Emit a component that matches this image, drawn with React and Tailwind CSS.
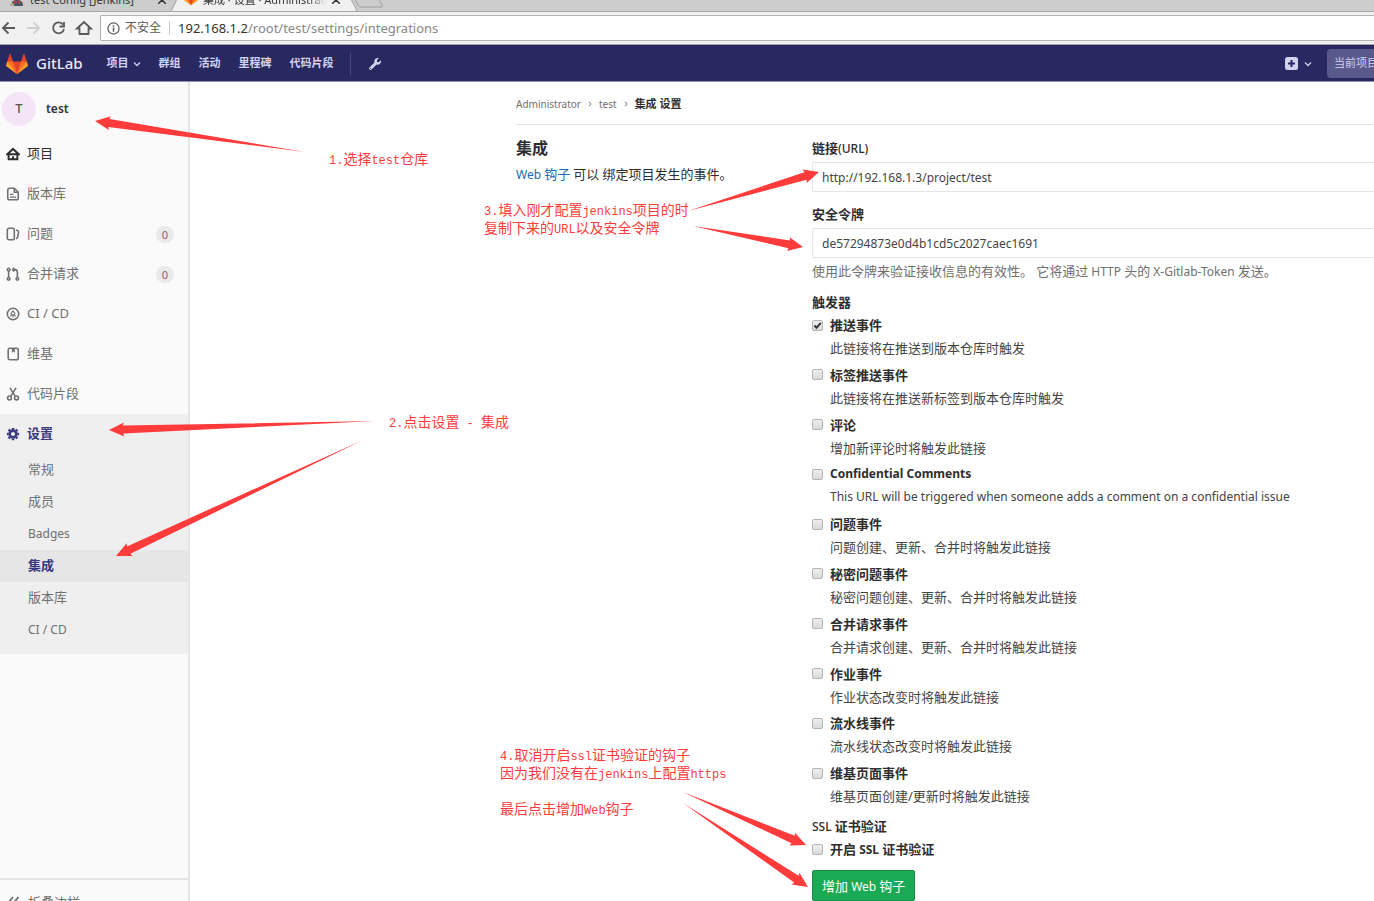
import React, { useState } from 'react';
import { FaWrench } from 'react-icons/fa';

const topLinks = ['群组', '活动', '里程碑', '代码片段'];

const sideItems = [
  { label: '项目', icon: 'home', dark: true },
  { label: '版本库', icon: 'doc' },
  { label: '问题', icon: 'issues', count: 0 },
  { label: '合并请求', icon: 'merge', count: 0 },
  { label: 'CI / CD', icon: 'rocket' },
  { label: '维基', icon: 'book' },
  { label: '代码片段', icon: 'snippet' },
];

const settingsItems = [
  { label: '常规' },
  { label: '成员' },
  { label: 'Badges', latin: true },
  { label: '集成', active: true },
  { label: '版本库' },
  { label: 'CI / CD', latin: true },
];

const initialTriggers = [
  { id: 'push', title: '推送事件', text: '此链接将在推送到版本仓库时触发', checked: true },
  { id: 'tag', title: '标签推送事件', text: '此链接将在推送新标签到版本仓库时触发' },
  { id: 'note', title: '评论', text: '增加新评论时将触发此链接' },
  { id: 'confidential-note', title: 'Confidential Comments', text: 'This URL will be triggered when someone adds a comment on a confidential issue', latin: true },
  { id: 'issue', title: '问题事件', text: '问题创建、更新、合并时将触发此链接' },
  { id: 'confidential-issue', title: '秘密问题事件', text: '秘密问题创建、更新、合并时将触发此链接' },
  { id: 'merge', title: '合并请求事件', text: '合并请求创建、更新、合并时将触发此链接' },
  { id: 'job', title: '作业事件', text: '作业状态改变时将触发此链接' },
  { id: 'pipeline', title: '流水线事件', text: '流水线状态改变时将触发此链接' },
  { id: 'wiki', title: '维基页面事件', text: '维基页面创建/更新时将触发此链接' },
];

// Each arrow goes from its thin tail to its tip
const arrows = [
  { from: [305, 152], to: [95, 121] },
  { from: [375, 421], to: [109, 430] },
  { from: [363, 440], to: [116, 556] },
  { from: [688, 211], to: [819, 172] },
  { from: [693, 226], to: [803, 247] },
  { from: [683, 792], to: [806, 845] },
  { from: [683, 803], to: [808, 887] },
];

const arrowPoints = ({ from, to }) => {
  const dx = to[0] - from[0];
  const dy = to[1] - from[1];
  const len = Math.hypot(dx, dy);
  const ux = dx / len;
  const uy = dy / len;
  const at = (back, side) => `${to[0] - ux * back - uy * side},${to[1] - uy * back + ux * side}`;
  return [`${from[0]},${from[1]}`, at(14, 4), at(15, 7), `${to[0]},${to[1]}`, at(15, -7), at(14, -4)].join(' ');
};

const GitLabLogo = ({ className }) => (
  <svg viewBox="0 0 36 36" className={className} aria-hidden="true">
    <path fill="#e24329" d="M2 14l9.38 9v-9l-4-12.28c-.205-.632-1.176-.632-1.38 0z" />
    <path fill="#e24329" d="M34 14l-9.38 9v-9l4-12.28c.205-.632 1.176-.632 1.38 0z" />
    <path fill="#e24329" d="M18 34.38L3 14h30z" />
    <path fill="#fc6d26" d="M18 34.38L11.38 14H2l4 11z" />
    <path fill="#fc6d26" d="M18 34.38L24.62 14H34l-4 11z" />
    <path fill="#fca326" d="M2 14L.1 20.16c-.18.565 0 1.2.5 1.56L18 34.38z" />
    <path fill="#fca326" d="M34 14l1.9 6.16c.18.565 0 1.2-.5 1.56L18 34.38z" />
  </svg>
);

const Chevron = ({ className }) => (
  <svg viewBox="0 0 8 8" className={className} fill="none" stroke="currentColor" strokeWidth="1.3" aria-hidden="true">
    <path d="M1 2.5l3 3 3-3" />
  </svg>
);

const sideIcons = {
  home: (
    <>
      <path d="M1.500 8.200L8 2.200l6.500 6z" strokeWidth="2.200" />
      <path d="M3 8.500V14h10V8.500M8 14v-3.500" strokeWidth="2.200" />
    </>
  ),
  doc: (
    <>
      <path d="M9.500 1.500H4A2 2 0 0 0 2 3.500v9a2 2 0 0 0 2 2h8a2 2 0 0 0 2-2V6z" />
      <path d="M9.500 1.500V6H14" />
      <path d="M4.500 8.500h4M4.500 11.500h7" strokeWidth="1.400" />
    </>
  ),
  issues: (
    <>
      <rect x="1.500" y="1.500" width="8" height="13" rx="2" />
      <path d="M11.500 3.500c2 .3 3 1.200 2.800 3l-.8 4.500c-.2 1.200-.9 2-2 2.500" />
    </>
  ),
  merge: (
    <>
      <circle cx="3" cy="3" r="1.500" />
      <circle cx="3" cy="13.500" r="1.500" />
      <circle cx="13" cy="13.500" r="1.500" />
      <path d="M3 4.500V12M13 12V6c0-2-1-3-3-3H7.500M9.500 1L7.500 3l2 2" />
    </>
  ),
  rocket: (
    <>
      <circle cx="8" cy="8" r="6.500" />
      <path d="M8 4.500l2 2.500v2H6V7zM6 9.500l-.8 1.500M10 9.500l.8 1.500M8 9.500V12" strokeWidth="1.200" />
    </>
  ),
  book: (
    <>
      <rect x="2.500" y="1.500" width="11.500" height="13" rx="2" />
      <path d="M7 2h3v4L8.500 5 7 6z" fill="currentColor" strokeWidth="0.500" />
    </>
  ),
  snippet: (
    <>
      <circle cx="4" cy="12.500" r="2.200" />
      <circle cx="12" cy="12.500" r="2.200" />
      <path d="M4.500 1l6 9.500M11.500 1l-6 9.500" />
    </>
  ),
};

const SideIcon = ({ name }) => (
  <svg viewBox="0 0 16 16" className="w-[14px] h-[14px] shrink-0" fill="none" stroke="currentColor" strokeWidth="1.8" aria-hidden="true">
    {sideIcons[name]}
  </svg>
);

const GearIcon = () => (
  <svg viewBox="0 0 16 16" className="w-[14px] h-[14px] shrink-0" fill="none" stroke="currentColor" aria-hidden="true">
    <circle cx="8" cy="8" r="3.800" strokeWidth="3" />
    <path strokeWidth="3" d="M8 1v2M8 13v2M1 8h2M13 8h2M3 3l1.500 1.500M11.500 11.500L13 13M3 13l1.500-1.500M11.500 4.500L13 3" />
  </svg>
);

const Checkbox = ({ id, checked, onChange }) => (
  <span className="relative flex w-[11px] h-[11px] shrink-0">
    <input
      id={id}
      type="checkbox"
      checked={checked}
      onChange={onChange}
      className="appearance-none w-full h-full rounded-xs border border-[#b4b4b4] bg-gradient-to-b from-[#eeeeee] to-[#dadada]"
    />
    {checked && (
      <svg viewBox="0 0 11 11" className="absolute inset-0 pointer-events-none" fill="none" stroke="#333" strokeWidth="2" aria-hidden="true">
        <path d="M2.500 5.500l2 2.300L8.800 2.800" />
      </svg>
    )}
  </span>
);

const CloseTab = () => (
  <button type="button" aria-label="关闭" className="ml-auto pb-[7px]">
    <svg viewBox="0 0 8 8" className="w-2 h-2" stroke="#333" strokeWidth="1.5">
      <path d="M0 0l8 8M8 0L0 8" />
    </svg>
  </button>
);

const BrowserBar = () => (
  <div className="bg-[#f1f1f1]">
    <div className="flex items-end h-3 overflow-hidden bg-[#cccccc] border-b border-[#a8a8a8] text-[11px] leading-4 text-[#333]">
      <div className="flex items-end w-[171px] pl-[10px] pr-[5px] gap-[6px] shrink-0">
        <svg viewBox="0 0 14 14" className="w-[14px] h-[14px] mb-[5px]" aria-hidden="true">
          <circle cx="7" cy="4" r="4" fill="#e8c9a8" />
          <path d="M1 14c0-4 2-6 6-6s6 2 6 6z" fill="#4a5568" />
          <path d="M4 8l3 2 3-2v4l-3-2-3 2z" fill="#d33833" />
          <path d="M1 10l3 2v2H0z" fill="#b9aa92" />
        </svg>
        <span className="pb-[3px] whitespace-nowrap">test Config [Jenkins]</span>
        <CloseTab />
      </div>
      <svg viewBox="0 0 8 12" className="w-2 h-3 shrink-0" aria-hidden="true">
        <path d="M0 12L6 0h2v12z" fill="#f1f1f1" />
        <path d="M0 12L6 0" stroke="#999" fill="none" />
      </svg>
      <div className="flex items-end w-[170px] h-3 pl-1 pr-[9px] gap-1 shrink-0 bg-[#f1f1f1]">
        <GitLabLogo className="w-4 h-4 mb-[5px]" />
        <span className="pb-[3px] whitespace-nowrap overflow-hidden w-[124px] mask-r-from-85%">集成 · 设置 · Administrator</span>
        <CloseTab />
      </div>
      <svg viewBox="0 0 40 12" className="w-10 h-3 shrink-0" aria-hidden="true">
        <path d="M0 0h2l6 12H0z" fill="#f1f1f1" />
        <path d="M2 0l6 12M6 0l3 6q1 2 3 2h20q2 0 1-2l-3-6" stroke="#a0a0a0" fill="none" />
      </svg>
    </div>
    <div className="flex items-center h-[33px] pl-[1px] text-[#5a5a5a] border-b border-[#a0a0a8]">
      <svg viewBox="0 0 94 16" className="w-[94px] h-4 shrink-0" fill="none" stroke="currentColor" strokeWidth="1.8" aria-hidden="true">
        <path d="M14 8H2M7.500 2.500L2 8l5.500 5.500" />
        <path d="M26 8h12M32.500 2.500L38 8l-5.500 5.500" stroke="#d0d0d0" />
        <path d="M62 4.500A5.500 5.500 0 1 0 63 9M63 2v4.500h-4.500" />
        <path d="M76 8.500L83 2l7 6.500h-2.500V14h-9V8.500z" />
      </svg>
      <div className="flex items-center flex-1 h-[26px] ml-[5px] pl-[6px] bg-white border border-r-0 border-[#b0b0b0] rounded-l-xs text-[12px]">
        <svg viewBox="0 0 14 14" className="w-[13px] h-[13px] shrink-0" fill="none" stroke="currentColor" strokeWidth="1.3" aria-hidden="true">
          <circle cx="7" cy="7" r="6" />
          <path d="M7 6v4.500M7 3.500v1.500" strokeWidth="1.600" />
        </svg>
        <span className="ml-[5px] pr-2 border-r border-[#c8c8c8] leading-[14px]">不安全</span>
        <span className="ml-2 text-[13px] leading-5 text-[#888]">
          <span className="text-[#333]">192.168.1.2</span>/root/test/settings/integrations
        </span>
      </div>
    </div>
  </div>
);

const TopNav = () => (
  <header className="flex items-center h-[37px] pt-px bg-[#292961] border-b border-[#9494b0] text-[#d1d1f0] text-[11px] font-bold shrink-0">
    <a href="#" className="flex items-center gap-2 pl-[6px] text-[15px] font-medium text-[#e8e8f8]">
      <GitLabLogo className="w-[22px] h-[22px]" />
      GitLab
    </a>
    <nav className="flex items-center gap-[18px] ml-6">
      <button type="button" className="flex items-center gap-1">
        项目
        <Chevron className="w-2 h-2" />
      </button>
      {topLinks.map((label) => (
        <a key={label} href="#">{label}</a>
      ))}
    </nav>
    <a href="#" aria-label="管理区域" className="flex items-center h-[22px] ml-4 pl-[18px] border-l border-[#49487f]">
      <FaWrench size={12} />
    </a>
    <button type="button" aria-label="新建" className="flex items-center gap-[6px] ml-auto mr-[15px]">
      <svg viewBox="0 0 13 13" className="w-[13px] h-[13px]" aria-hidden="true">
        <rect width="13" height="13" rx="2.500" fill="#d1d1f0" />
        <path d="M6.500 3v7M3 6.500h7" stroke="#292961" strokeWidth="2" />
      </svg>
      <Chevron className="w-2 h-2" />
    </button>
    <button type="button" className="w-[47px] h-[29px] pl-[7px] overflow-hidden whitespace-nowrap rounded-l bg-[#5a598b] font-normal text-left">
      当前项目
    </button>
  </header>
);

const Sidebar = () => (
  <aside className="flex flex-col w-[190px] shrink-0 bg-[#fafafa] border-r-2 border-[#e5e5e5] text-[13px] text-[#707070]">
    <a href="#" className="flex items-center gap-[10px] pt-[10px] pl-[2px] mb-2 font-semibold text-[12px] text-[#333]">
      <span className="flex items-center justify-center w-[34px] h-[34px] rounded-full bg-[#f3e5f5] font-medium text-[13px] text-[#555]">T</span>
      test
    </a>
    <nav>
      {sideItems.map((item) => (
        <a
          key={item.label}
          href="#"
          className={`flex items-center h-10 pl-[6px] pr-[14px] gap-[7px] ${item.dark ? 'text-[#2e2e2e]' : ''}`}
        >
          <SideIcon name={item.icon} />
          {item.label}
          {item.count !== undefined && (
            <span className="ml-auto px-[6px] rounded-full bg-[#e9e9e9] text-[11px] leading-[17px]">{item.count}</span>
          )}
        </a>
      ))}
      <div className="pb-2 bg-[#efefef]">
        <a href="#" className="flex items-center h-10 pl-[6px] gap-[7px] font-bold text-[#393982]">
          <GearIcon />
          设置
        </a>
        {settingsItems.map((item) => (
          <a
            key={item.label}
            href="#"
            className={`flex items-center h-8 pl-7 ${item.latin ? 'text-[12px]' : ''} ${item.active ? 'bg-[#e6e6e6] font-bold text-[#393982]' : ''}`}
          >
            {item.label}
          </a>
        ))}
      </div>
    </nav>
    <button type="button" className="flex items-start h-[23px] mt-auto pt-3 pl-[7px] gap-2 overflow-hidden border-t-2 border-[#e5e5e5] text-[13px] leading-5 shrink-0">
      <svg viewBox="0 0 13 13" className="w-[13px] h-[13px] mt-1" fill="none" stroke="currentColor" strokeWidth="1.8" aria-hidden="true">
        <path d="M6 1L1.500 6.500 6 12M11.500 1L7 6.500l4.500 5.500" />
      </svg>
      折叠边栏
    </button>
  </aside>
);

// Latin runs sit one step smaller than the Chinese text round them
const Latin = ({ children, className = '' }) => (
  <span className={`text-[12px] leading-none ${className}`}>{children}</span>
);

const HookForm = () => {
  const [url, setUrl] = useState('http://192.168.1.3/project/test');
  const [token, setToken] = useState('de57294873e0d4b1cd5c2027caec1691');
  const [triggers, setTriggers] = useState(initialTriggers);
  const [ssl, setSsl] = useState(false);

  const toggle = (id) => {
    setTriggers(triggers.map((t) => (t.id === id ? { ...t, checked: !t.checked } : t)));
  };

  const inputClass = 'w-full h-[30px] pl-[9px] border border-r-0 border-[#e5e5e5] rounded-l-xs text-[12px] text-[#444]';

  return (
    <form onSubmit={(e) => e.preventDefault()} className="flex flex-col flex-1 pt-[13px] text-[13px] leading-5 text-[#2e2e2e]">
      <label htmlFor="hook-url" className="mb-1 font-semibold">链接<Latin className="font-medium">(URL)</Latin></label>
      <input id="hook-url" type="text" value={url} onChange={(e) => setUrl(e.target.value)} className={inputClass} />
      <label htmlFor="hook-token" className="mt-3 mb-1 font-semibold">安全令牌</label>
      <input id="hook-token" type="text" value={token} onChange={(e) => setToken(e.target.value)} className={inputClass} />
      <p className="mt-[3px] text-[#707070]">
        使用此令牌来验证接收信息的有效性。<Latin> </Latin>它将通过<Latin> HTTP </Latin>头的<Latin> X-Gitlab-Token </Latin>发送。
      </p>
      <h5 className="mt-[11px] font-semibold">触发器</h5>
      <ul className="grid flex-1 auto-rows-fr">
        {triggers.map((t) => (
          <li key={t.id} className={`pt-[3px] ${t.latin ? 'text-[12px]' : ''}`}>
            <div className="flex items-center gap-[7px]">
              <Checkbox id={t.id} checked={!!t.checked} onChange={() => toggle(t.id)} />
              <label htmlFor={t.id} className="font-bold">{t.title}</label>
            </div>
            <p className="pl-[18px] pt-[3px] text-[#444]">{t.text}</p>
          </li>
        ))}
      </ul>
      <h5 className="mt-[6px] font-semibold"><Latin className="font-medium">SSL </Latin>证书验证</h5>
      <div className="flex items-center gap-[7px] mt-[3px]">
        <Checkbox id="ssl" checked={ssl} onChange={() => setSsl(!ssl)} />
        <label htmlFor="ssl" className="font-bold">开启<Latin> SSL </Latin>证书验证</label>
      </div>
      <button type="submit" className="self-start h-[31px] mt-[11px] px-[9px] rounded-xs bg-[#1aaa55] border border-[#168f48] text-white">
        增加<Latin> Web </Latin>钩子
      </button>
    </form>
  );
};

const Mono = ({ children }) => (
  <span className="font-['Liberation_Mono',monospace] text-[12px] leading-none">{children}</span>
);

// Red notes and arrows laid over the page
const Annotations = () => (
  <div className="absolute inset-0 overflow-hidden pointer-events-none text-[14px] leading-[18px] text-[#ff3c3c] whitespace-nowrap">
    <svg className="w-full h-full" fill="#ff3b3b" aria-hidden="true">
      {arrows.map((arrow) => (
        <polygon key={arrow.to.join()} points={arrowPoints(arrow)} />
      ))}
    </svg>
    <p className="absolute left-[329px] top-[150px]"><Mono>1.</Mono>选择<Mono>test</Mono>仓库</p>
    <p className="absolute left-[389px] top-[413px]"><Mono>2.</Mono>点击设置<Mono> - </Mono>集成</p>
    <p className="absolute left-[484px] top-[201px]">
      <Mono>3.</Mono>填入刚才配置<Mono>jenkins</Mono>项目的时<br />
      复制下来的<Mono>URL</Mono>以及安全令牌
    </p>
    <p className="absolute left-[500px] top-[746px]">
      <Mono>4.</Mono>取消开启<Mono>ssl</Mono>证书验证的钩子<br />
      因为我们没有在<Mono>jenkins</Mono>上配置<Mono>https</Mono><br />
      <br />
      最后点击增加<Mono>Web</Mono>钩子
    </p>
  </div>
);

const App = () => (
  <div className="relative flex flex-col h-screen overflow-hidden bg-white font-['Noto_Sans','Noto_Sans_CJK_SC',sans-serif]">
    <BrowserBar />
    <TopNav />
    <div className="flex flex-1 min-h-0">
      <Sidebar />
      <main className="flex flex-col flex-1 min-w-0 pl-[326px]">
        <nav className="flex items-center h-[43px] pt-[2px] gap-[6px] border-b border-[#e5e5e5] text-[10px] text-[#707070] shrink-0">
          <a href="#">Administrator</a>
          <Chevron className="w-[6px] h-[6px] -rotate-90" />
          <a href="#">test</a>
          <Chevron className="w-[6px] h-[6px] -rotate-90" />
          <a href="#" className="text-[11px] font-bold text-[#2e2e2e]">集成 设置</a>
        </nav>
        <div className="flex flex-1 min-h-0">
          <section className="w-[296px] shrink-0 pt-[11px]">
            <h4 className="text-[16px] leading-6 font-bold text-[#2e2e2e]">集成</h4>
            <p className="mt-1 text-[13px] leading-5 text-[#2e2e2e]">
              <a href="#" className="text-[#1b69b6]"><Latin>Web </Latin>钩子</a>
              <Latin> </Latin>可以<Latin> </Latin>绑定项目发生的事件。
            </p>
          </section>
          <HookForm />
        </div>
      </main>
    </div>
    <Annotations />
  </div>
);

export default App;
